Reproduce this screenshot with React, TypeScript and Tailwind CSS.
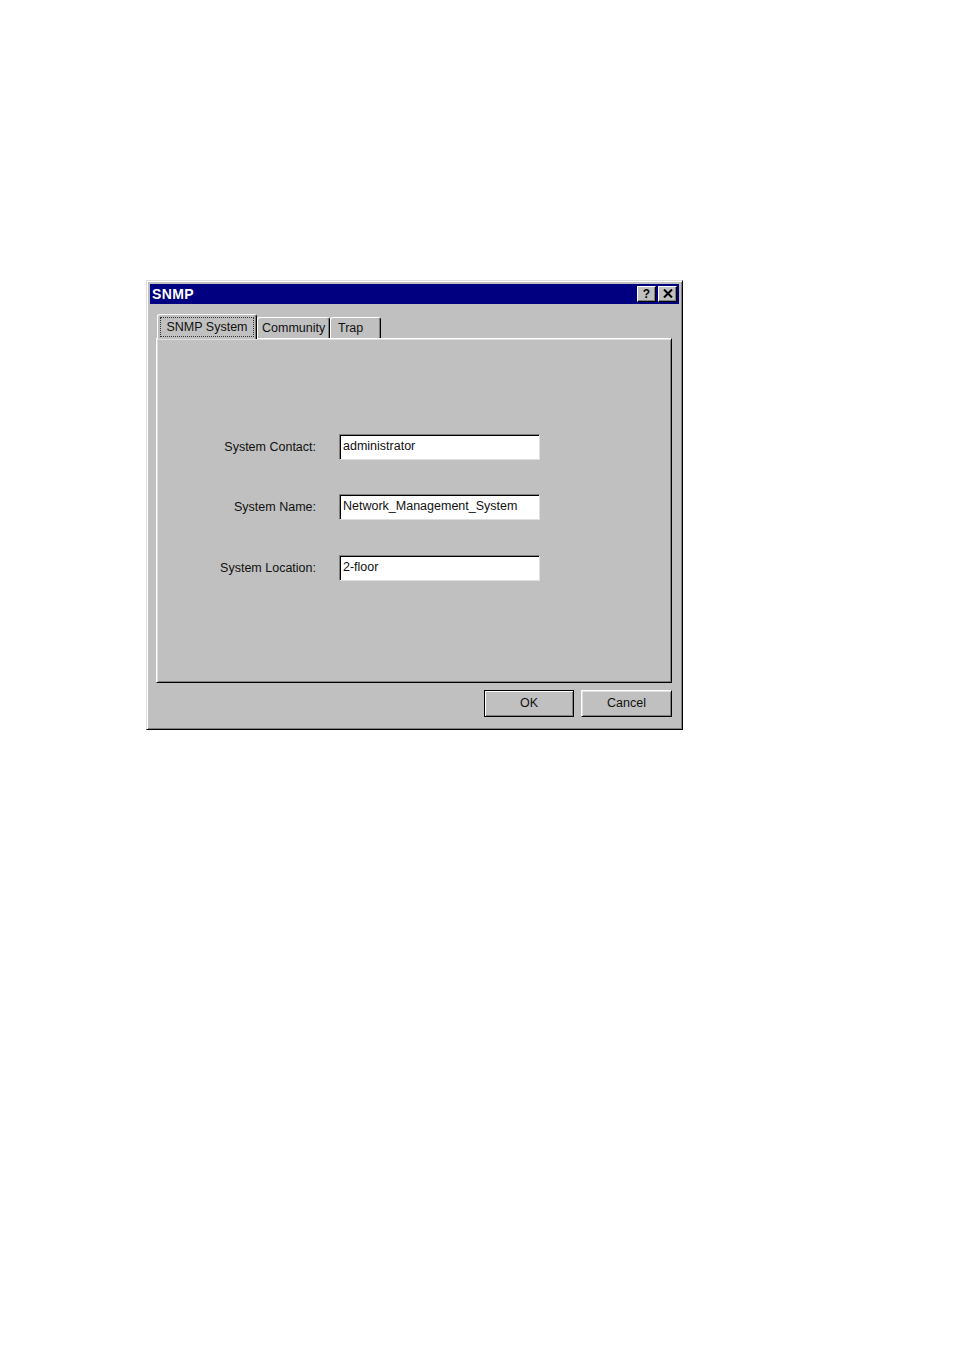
import React from "react";

const font = { fontFamily: '"Liberation Sans", Arial, sans-serif' };

function Field({ label, value, className = "" }: { label: string; value: string; className?: string }) {
  return (
    <div className={"flex items-center gap-[23px] " + className}>
      <div className="w-[159px] text-right text-[12.5px] leading-[16px] text-[#111]">{label}</div>
      <div className="w-[201px] h-[26px] bg-white border border-t-[#808080] border-l-[#808080] border-r-[#dfdfdf] border-b-[#dfdfdf] shadow-[inset_1px_1px_0_#000,inset_-1px_-1px_0_#fff] pl-[3px] pt-[3px] text-[12.5px] leading-[16px] text-[#111] whitespace-nowrap">
        {value}
      </div>
    </div>
  );
}

export default function App() {
  return (
    <div className="w-[954px] h-[1350px] bg-white pt-[280px] pl-[146px]" style={font}>
      <div className="w-[537px] h-[450px] bg-[#c0c0c0] border border-t-[#dfdfdf] border-l-[#dfdfdf] border-r-black border-b-black shadow-[inset_1px_1px_0_#fff,inset_-1px_-1px_0_#808080] p-[3px] flex flex-col">
        {/* Title bar */}
        <div className="h-[20px] bg-[#000080] flex items-center justify-between pl-[2px] pr-[2px]">
          <span className="text-white font-bold text-[14px] leading-none tracking-[0.4px]">SNMP</span>
          <div className="flex gap-[2px]">
            <div className="w-[19px] h-[16px] bg-[#c0c0c0] border border-t-white border-l-white border-r-black border-b-black shadow-[inset_-1px_-1px_0_#808080] flex items-center justify-center text-black font-bold text-[12px] leading-none pb-[1px]">
              ?
            </div>
            <div className="w-[19px] h-[16px] bg-[#c0c0c0] border border-t-white border-l-white border-r-black border-b-black shadow-[inset_-1px_-1px_0_#808080] flex items-center justify-center pb-[1px]">
              <svg width="10" height="9" viewBox="0 0 10 9">
                <path d="M1 0.5 L9 8.5 M9 0.5 L1 8.5" stroke="#000" strokeWidth="2" />
              </svg>
            </div>
          </div>
        </div>

        {/* Tabs */}
        <div className="relative z-10 mt-[10px] ml-[7px] h-[24px] flex items-end">
          <div className="h-[25px] -mb-px w-[100px] bg-[#c0c0c0] border-l border-t border-r border-l-white border-t-white border-r-black rounded-tl-[3px] rounded-tr-[3px] shadow-[inset_-1px_0_0_#808080] flex justify-center pt-[2px]">
            <span className="h-[20px] px-[5px] border border-dotted border-[#333] text-[12.5px] leading-[18px] text-[#111]">
              SNMP System
            </span>
          </div>
          <div className="h-[21px] w-[73px] bg-[#c0c0c0] border-l border-t border-r border-l-white border-t-white border-r-black rounded-tl-[3px] rounded-tr-[3px] shadow-[inset_-1px_0_0_#808080] pl-[4px] pt-[2px] text-[12.5px] leading-[16px] text-[#111]">
            Community
          </div>
          <div className="h-[21px] w-[51px] bg-[#c0c0c0] border-l border-t border-r border-l-white border-t-white border-r-black rounded-tl-[3px] rounded-tr-[3px] shadow-[inset_-1px_0_0_#808080] pl-[7px] pt-[2px] text-[12.5px] leading-[16px] text-[#111]">
            Trap
          </div>
        </div>

        {/* Panel */}
        <div className="ml-[6px] w-[516px] h-[345px] border border-t-white border-l-white border-r-black border-b-black shadow-[inset_1px_1px_0_#dfdfdf,inset_-1px_-1px_0_#808080] pt-[95px] flex flex-col">
          <Field label="System Contact:" value="administrator" />
          <Field label="System Name:" value="Network_Management_System" className="mt-[34px]" />
          <Field label="System Location:" value="2-floor" className="mt-[35px]" />
        </div>

        {/* Buttons */}
        <div className="ml-[6px] w-[516px] mt-[7px] flex justify-end gap-[7px]">
          <div className="w-[90px] h-[27px] border border-black bg-[#c0c0c0] shadow-[inset_1px_1px_0_#fff,inset_-1px_-1px_0_#808080] flex items-center justify-center text-[12.5px] text-[#111]">
            OK
          </div>
          <div className="w-[91px] h-[27px] border border-t-white border-l-white border-r-black border-b-black bg-[#c0c0c0] shadow-[inset_1px_1px_0_#dfdfdf,inset_-1px_-1px_0_#808080] flex items-center justify-center text-[12.5px] text-[#111]">
            Cancel
          </div>
        </div>
      </div>
    </div>
  );
}
